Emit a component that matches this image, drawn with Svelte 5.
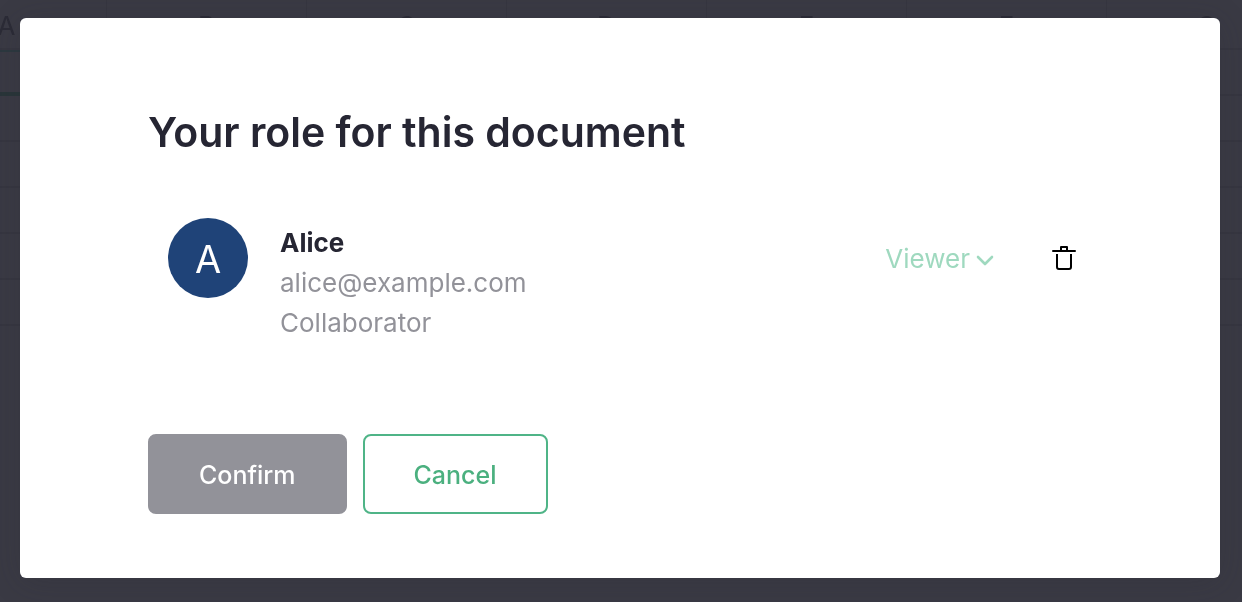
<script>
  const columns = ['A', 'B', 'C', 'D', 'E', 'F', 'G'];
  const rows = [1, 2, 3, 4, 5, 6];
  const roles = ['Viewer', 'Editor', 'Owner'];
  let role = $state('Viewer');
</script>

<div class="page">
  <div class="sheet" aria-hidden="true">
    <table>
      <thead>
        <tr>
          {#each columns as column}
            <th>{column}</th>
          {/each}
        </tr>
      </thead>
      <tbody>
        {#each rows as row}
          <tr>
            {#each columns as column, i}
              <td class:active={i === 0 && row === 1}></td>
            {/each}
          </tr>
        {/each}
      </tbody>
    </table>
  </div>

  <div class="dialog" role="dialog" aria-modal="true" aria-labelledby="title">
    <h1 id="title">Your role for this document</h1>

    <div class="member">
      <span class="avatar">A</span>
      <div class="details">
        <strong>Alice</strong>
        <span>alice@example.com</span>
        <span>Collaborator</span>
      </div>
      <div class="role">
        <select aria-label="Role" bind:value={role}>
          {#each roles as option}
            <option>{option}</option>
          {/each}
        </select>
        <svg width="18" height="16" viewBox="0 0 18 16" aria-hidden="true">
          <path d="M2 6l7 7 7-7" fill="none" stroke="currentColor" stroke-width="2.6" stroke-linecap="round" stroke-linejoin="round" />
        </svg>
      </div>
      <button class="remove" aria-label="Remove">
        <svg width="24" height="24" viewBox="0 0 24 24" aria-hidden="true">
          <g fill="none" stroke="currentColor" stroke-width="2" stroke-linejoin="round">
            <path d="M1 5h22" stroke-linecap="round" />
            <path d="M9 5V1h6v4" />
            <path d="M5 8v13q0 2 2 2h10q2 0 2-2V8" />
          </g>
        </svg>
      </button>
    </div>

    <div class="actions">
      <button class="confirm" disabled>Confirm</button>
      <button class="cancel">Cancel</button>
    </div>
  </div>
</div>

<style>
  :global(body) {
    margin: 0;
    background: #3a3a44;
  }

  .page {
    box-sizing: border-box;
    min-height: 100vh;
    padding: 18px 22px 24px 20px;
    font-family: Inter, "Liberation Sans", sans-serif;
    font-size: 26px;
    line-height: 40px;
    color: #262633;
  }

  .sheet {
    position: fixed;
    inset: 0;
    overflow: hidden;
  }

  table {
    width: 1400px;
    margin-left: -93px;
    table-layout: fixed;
    border-collapse: separate;
    border-spacing: 0;
  }

  th,
  td {
    box-sizing: border-box;
    width: 200px;
    height: 46px;
    padding: 0;
    border-bottom: 2px solid #363640;
  }

  th {
    height: 50px;
    padding-top: 4px;
    border-right: 1px solid #363640;
    color: #2b2b36;
    font-size: 26px;
    font-weight: 400;
    line-height: 44px;
  }

  td.active {
    border-top: 2px solid #2c383f;
    border-bottom: 4px solid #293539;
  }

  .dialog {
    position: relative;
    padding: 86px 128px 64px;
    border-radius: 6px;
    background: #fff;
    box-shadow: 0 4px 32px rgba(38, 38, 51, 0.2);
  }

  h1 {
    margin: 0;
    font-size: 41px;
    font-weight: 600;
    line-height: 56px;
  }

  .member {
    display: flex;
    align-items: flex-start;
    padding: 58px 16px 0 20px;
  }

  .avatar {
    box-sizing: border-box;
    width: 80px;
    height: 80px;
    padding-top: 2px;
    border-radius: 50%;
    background: #1f4378;
    color: #fff;
    font-size: 38px;
    line-height: 78px;
    text-align: center;
  }

  .details {
    display: flex;
    flex: 1;
    flex-direction: column;
    padding: 5px 0 0 32px;
    color: #929299;
  }

  .details strong {
    color: #262633;
    font-weight: 700;
  }

  .role {
    display: flex;
    align-items: center;
    gap: 6px;
    height: 82px;
    color: #9fd9bf;
  }

  select {
    appearance: none;
    field-sizing: content;
    height: 40px;
    padding: 0;
    border: 0;
    background: none;
    color: inherit;
    font: inherit;
  }

  .remove {
    display: flex;
    align-items: center;
    height: 80px;
    margin-left: 58px;
    padding: 0;
    border: 0;
    background: none;
    color: #000;
  }

  .actions {
    display: flex;
    gap: 16px;
    margin-top: 91px;
  }

  .actions button {
    height: 80px;
    padding: 2px 49px 0;
    border: 2px solid #4fb487;
    border-radius: 8px;
    background: #fff;
    color: #4bb07f;
    font: inherit;
    font-size: 25px;
    font-weight: 500;
  }

  .actions .confirm {
    border-color: #929299;
    background: #929299;
    color: #fff;
  }
</style>
